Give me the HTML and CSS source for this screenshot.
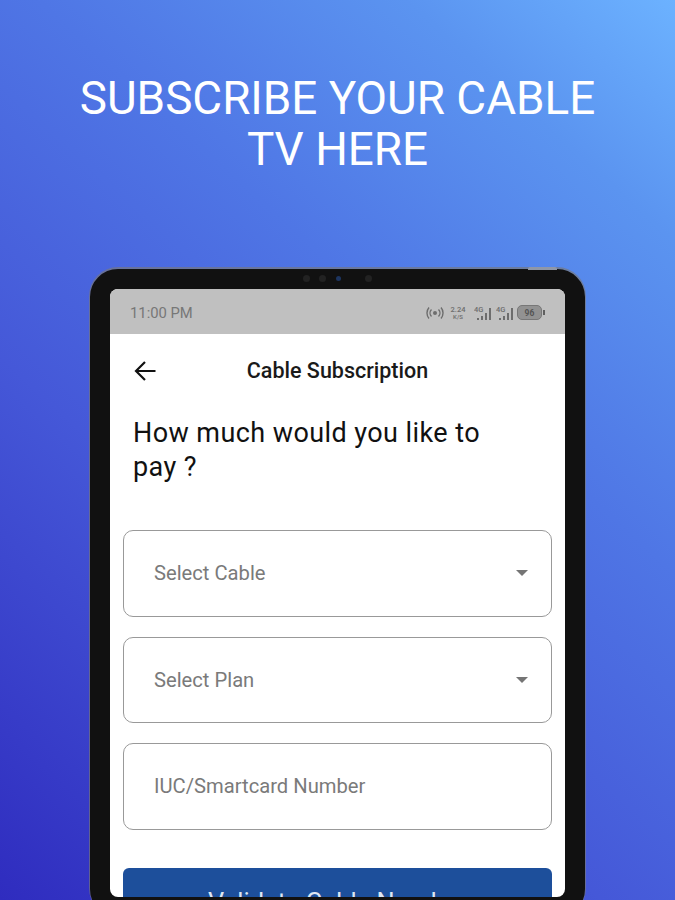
FILE: index.html
```html
<!DOCTYPE html>
<html lang="en">
<head>
<meta charset="utf-8">
<title>Cable Subscription</title>
<link rel="stylesheet" href="styles.css">
</head>
<body>
<main class="poster">
  <h1 class="headline">SUBSCRIBE YOUR CABLE<br>TV HERE</h1>
  <div class="device">
    <span class="power" aria-hidden="true"></span>
    <div class="camera-row" aria-hidden="true"><i></i><i></i><i class="lens"></i><i class="far"></i></div>
    <div class="screen">
      <div class="status">
        <span class="clock">11:00 PM</span>
        <div class="status-icons">
          <svg class="hotspot" width="18" height="14" viewBox="0 0 18 14"><circle cx="9" cy="7" r="2" fill="#6d6d6d"/><path d="M5.5 3.5a5 5 0 0 0 0 7M12.500 3.500a5 5 0 0 1 0 7M3 1.500a8.500 8.500 0 0 0 0 11M15 1.500a8.500 8.500 0 0 1 0 11" fill="none" stroke="#6d6d6d" stroke-width="1.400"/></svg>
          <span class="speed"><b>2.24</b><b class="unit">K/S</b></span>
          <svg class="sim" width="18" height="16" viewBox="0 0 18 16"><text x="0" y="7" class="net">4G</text><path d="M3 13h2v2H3zM7 11h2v4H7zM11 8h2v7h-2zM15 3h2v12h-2z" fill="#6d6d6d"/></svg>
          <svg class="sim" width="18" height="16" viewBox="0 0 18 16"><text x="0" y="7" class="net">4G</text><path d="M3 13h2v2H3zM7 11h2v4H7zM11 8h2v7h-2zM15 3h2v12h-2z" fill="#6d6d6d"/></svg>
          <span class="battery"><span class="level">96</span></span>
        </div>
      </div>
      <header class="appbar">
        <svg class="back" width="24" height="24" viewBox="0 0 24 24"><path d="M22.500 12H3M12 3 3 12l9 9" fill="none" stroke="#111" stroke-width="2.200"/></svg>
        <span class="title">Cable Subscription</span>
      </header>
      <h2 class="question">How much would you like to pay ?</h2>
      <form class="fields">
        <div class="field"><span>Select Cable</span><i class="caret"></i></div>
        <div class="field"><span>Select Plan</span><i class="caret"></i></div>
        <div class="field"><span>IUC/Smartcard Number</span></div>
        <div class="submit">Validate Cable Number</div>
      </form>
    </div>
  </div>
</main>
</body>
</html>
```
FILE: styles.css
```css
* { box-sizing: border-box; }
html, body { margin: 0; height: 100%; }
body { overflow: hidden; font-family: Roboto, "Liberation Sans", sans-serif; }
.poster {
  width: 675px;
  height: 900px;
  overflow: hidden;
  padding-top: 73px;
  background: linear-gradient(42deg, #2f2cbf 0%, #4558d8 36%, #4f76e5 62%, #5b94f0 84%, #6cb2ff 100%);
}
.headline {
  margin: 0 0 94px;
  font-size: 45.800px;
  line-height: 51px;
  font-weight: 400;
  color: #fff;
  text-align: center;
}
.device {
  position: relative;
  width: 495px;
  height: 648px;
  margin-left: 90px;
  border: 20px solid #111;
  border-radius: 28px;
  background: #111;
  box-shadow: 0 -1px 0 1px rgba(120,120,120,.65);
}
.power {
  position: absolute;
  top: -22px;
  right: 8px;
  width: 29px;
  height: 3px;
  border-radius: 2px 2px 0 0;
  background: #8f97a8;
}
.camera-row {
  position: absolute;
  top: -14px;
  left: 193px;
  display: flex;
  gap: 9px;
}
.camera-row i { width: 7px; height: 7px; border-radius: 50%; background: #222; }
.camera-row .lens { background: #1d3560; width: 5px; height: 5px; margin: 1px 0 0 1px; }
.camera-row .far { margin-left: 15px; }
.screen {
  height: 608px;
  overflow: hidden;
  border-radius: 8px;
  background: #fff;
}
.status {
  height: 45px;
  display: flex;
  align-items: center;
  justify-content: space-between;
  padding: 2px 23px 0 20px;
  background: #c0c0c0;
}
.clock { font-size: 14.800px; color: #777; }
.status-icons { display: flex; align-items: center; }
.speed { display: flex; flex-direction: column; align-items: center; width: 16px; margin: 0 8px 0 6px; color: #6d6d6d; }
.speed b { font-size: 7.500px; line-height: 8px; font-weight: 500; }
.speed .unit { font-size: 6px; line-height: 6px; }
.sim { margin-right: 4px; }
.net { font: 500 7.500px Roboto, sans-serif; fill: #6d6d6d; }
.battery {
  position: relative;
  width: 25px;
  height: 15px;
  margin-left: -1px;
  border: 1px solid #777;
  border-radius: 5px;
  background: #929292;
  display: flex;
  align-items: center;
  justify-content: center;
}
.battery::after {
  content: "";
  position: absolute;
  right: -4px;
  top: 4px;
  width: 2px;
  height: 5px;
  background: #5f5f5f;
}
.level { font-size: 8.500px; font-weight: 700; color: #555; }
.appbar {
  height: 73px;
  display: flex;
  align-items: center;
  justify-content: center;
  position: relative;
}
.back { position: absolute; left: 23px; top: 25px; }
.title { font-size: 21.500px; font-weight: 500; color: #1a1a1a; }
.question {
  margin: 0 0 46px;
  padding: 9px 60px 0 23px;
  font-size: 27px;
  line-height: 34px;
  font-weight: 400;
  letter-spacing: .42px;
  color: #111;
}
.fields { display: flex; flex-direction: column; gap: 20px; padding: 0 13px; }
.field {
  height: 86.500px;
  display: flex;
  align-items: center;
  justify-content: space-between;
  padding: 0 23px 0 30px;
  border: 1.500px solid #999;
  border-radius: 10px;
  font-size: 20.200px;
  color: #7a7a7a;
}
.caret {
  width: 0;
  height: 0;
  border-left: 6px solid transparent;
  border-right: 6px solid transparent;
  border-top: 6px solid #757575;
}
.submit {
  height: 70px;
  margin-top: 18.500px;
  padding-top: 19px;
  border-radius: 6px;
  background: #1d4f9b;
  color: #dfe7f3;
  font-size: 25.400px;
  line-height: 30px;
  text-align: center;
}
```
